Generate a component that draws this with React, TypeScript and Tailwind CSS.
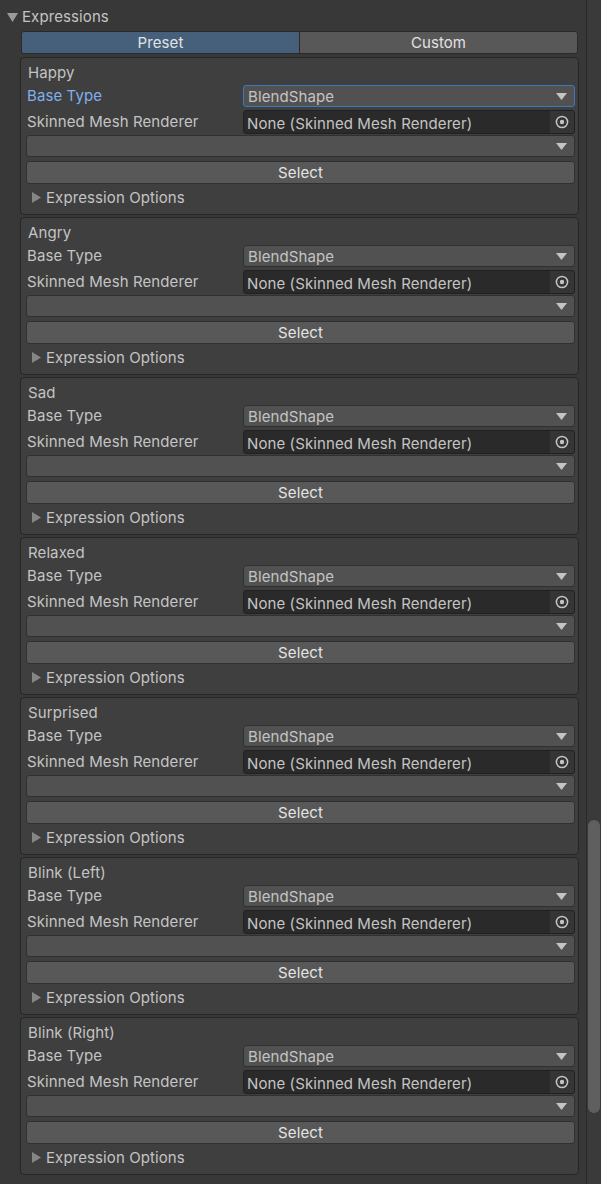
import React from 'react';

const expressions = ['Happy', 'Angry', 'Sad', 'Relaxed', 'Surprised', 'Blink (Left)', 'Blink (Right)'];

function DownArrow() {
  return (
    <svg width="11" height="7" viewBox="0 0 11 7" className="shrink-0">
      <polygon points="0,0 11,0 5.5,7" fill="#c4c4c4" />
    </svg>
  );
}

function Dropdown({ value, focused }: { value: string; focused?: boolean }) {
  return (
    <div
      className={`flex-1 h-[22px] flex items-center justify-between pl-[4px] pr-[7px] rounded-[3px] border bg-[#515151] ${
        focused ? 'border-[#3a79bb]' : 'border-[#303030]'
      }`}
    >
      <span className="text-[#c4c4c4] leading-none">{value}</span>
      <DownArrow />
    </div>
  );
}

function ObjectField() {
  return (
    <div className="flex-1 h-[24px] flex rounded-[3px] border border-[#212121] bg-[#2a2a2a] overflow-hidden">
      <span className="flex-1 flex items-center pl-[3px] pt-[2px] text-[#c4c4c4] leading-none">None (Skinned Mesh Renderer)</span>
      <div className="w-[24px] flex items-center justify-center bg-[#353535]">
        <svg width="14" height="14" viewBox="0 0 14 14">
          <circle cx="7" cy="7" r="5.6" fill="none" stroke="#c4c4c4" strokeWidth="1.5" />
          <circle cx="7" cy="7" r="2.2" fill="#c4c4c4" />
        </svg>
      </div>
    </div>
  );
}

function ExpressionCard({ name, focused }: { name: string; focused?: boolean }) {
  return (
    <div className="h-[158px] rounded-[4px] border border-[#262626] bg-[#3f3f3f] pt-[3px] pl-[5px] pr-[3px]">
      <div className="h-[22px] flex items-center pl-[2px] pt-[2px] text-[#c4c4c4]">{name}</div>

      <div className="mt-[2px] h-[22px] flex items-center">
        <span className={`w-[217px] pl-[1px] pt-[1px] ${focused ? 'text-[#7eb0ee]' : 'text-[#c4c4c4]'}`}>Base Type</span>
        <Dropdown value="BlendShape" focused={focused} />
      </div>

      <div className="mt-[3px] h-[24px] flex items-center">
        <span className="w-[217px] pl-[1px] text-[#c4c4c4]">Skinned Mesh Renderer</span>
        <ObjectField />
      </div>

      <div className="mt-[1px] h-[22px] flex">
        <Dropdown value="" />
      </div>

      <button className="mt-[4px] w-full h-[23px] flex items-center justify-center pt-[2px] rounded-[3px] border border-[#303030] bg-[#585858] text-[#e4e4e4]">
        Select
      </button>

      <div className="mt-[2px] h-[22px] flex items-center pl-[6px]">
        <svg width="9" height="11" viewBox="0 0 9 11" className="mr-[5px]">
          <polygon points="0,0 9,5.5 0,11" fill="#868686" />
        </svg>
        <span className="text-[#c4c4c4] pt-[2px]">Expression Options</span>
      </div>
    </div>
  );
}

export default function App() {
  return (
    <div className="w-[601px] h-[1184px] overflow-hidden flex bg-[#383838] font-['Inter','Noto_Sans',sans-serif] text-[15px] tracking-[0.1px]">
      <div className="w-[586px] pt-[6px]">
        <div className="h-[22px] flex items-center pl-[7px]">
          <svg width="11" height="9" viewBox="0 0 11 9" className="mr-[4px]">
            <polygon points="0,0 11,0 5.5,9" fill="#9a9a9a" />
          </svg>
          <span className="text-[#c4c4c4]">Expressions</span>
        </div>

        <div className="mt-[3px] ml-[21px] w-[557px] h-[23px] flex rounded-[3px] border border-[#2a2a2a] overflow-hidden">
          <div className="w-[278px] flex items-center justify-center pt-[2px] bg-[#46607c] text-[#e2e2e2] border-r border-[#2a2a2a]">Preset</div>
          <div className="flex-1 flex items-center justify-center pt-[2px] bg-[#585858] text-[#e2e2e2]">Custom</div>
        </div>

        <div className="mt-[3px] ml-[20px] w-[559px] flex flex-col gap-[2px]">
          {expressions.map((name, i) => (
            <ExpressionCard key={name} name={name} focused={i === 0} />
          ))}
        </div>
      </div>

      <div className="w-[15px] border-l border-[#2a2a2a] bg-[#3a3a3a] pl-[1px] pr-[1px]">
        <div className="mt-[820px] h-[293px] rounded-full bg-[#5f5f5f]" />
      </div>
    </div>
  );
}
